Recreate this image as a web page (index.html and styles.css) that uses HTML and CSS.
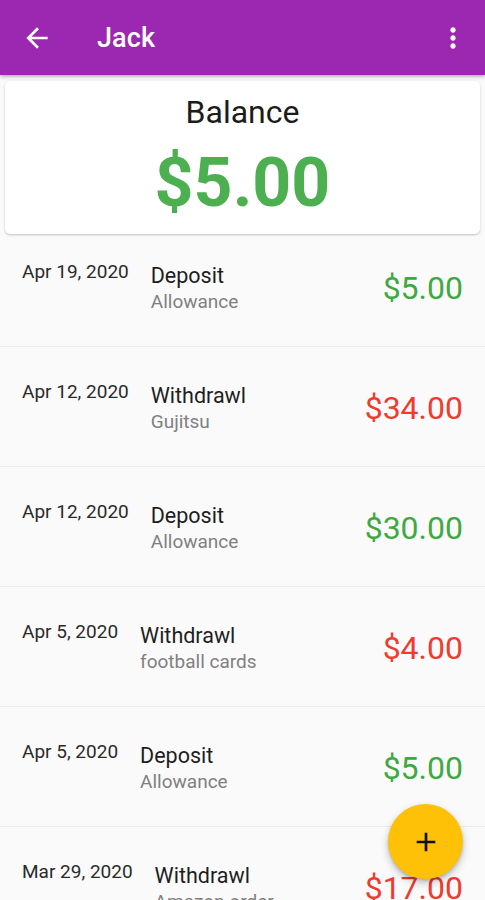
FILE: index.html
```html
<!DOCTYPE html>
<html lang="en">
<head>
<meta charset="utf-8">
<title>Jack</title>
<link rel="stylesheet" href="styles.css">
</head>
<body>
<div class="app">
  <header class="appbar">
    <svg class="icon back" viewBox="0 0 24 24" aria-hidden="true"><path d="M20 11H7.83l5.59-5.59L12 4l-8 8 8 8 1.41-1.41L7.83 13H20v-2z"/></svg>
    <h1 class="appbar-title">Jack</h1>
    <svg class="icon more" viewBox="0 0 24 24" aria-hidden="true"><path d="M12 8c1.1 0 2-.9 2-2s-.9-2-2-2-2 .9-2 2 .9 2 2 2zm0 2c-1.1 0-2 .9-2 2s.9 2 2 2 2-.9 2-2-.9-2-2-2zm0 6c-1.1 0-2 .9-2 2s.9 2 2 2 2-.9 2-2-.9-2-2-2z"/></svg>
  </header>

  <section class="balance-card">
    <div class="balance-label">Balance</div>
    <div class="balance-amount">$5.00</div>
  </section>

  <div class="list">
    <ul class="list-inner">
      <li class="row">
        <div class="date">Apr 19, 2020</div>
        <div class="info"><div class="title">Deposit</div><div class="subtitle">Allowance</div></div>
        <div class="amount pos">$5.00</div>
      </li>
      <li class="row">
        <div class="date">Apr 12, 2020</div>
        <div class="info"><div class="title">Withdrawl</div><div class="subtitle">Gujitsu</div></div>
        <div class="amount neg">$34.00</div>
      </li>
      <li class="row">
        <div class="date">Apr 12, 2020</div>
        <div class="info"><div class="title">Deposit</div><div class="subtitle">Allowance</div></div>
        <div class="amount pos">$30.00</div>
      </li>
      <li class="row">
        <div class="date">Apr 5, 2020</div>
        <div class="info"><div class="title">Withdrawl</div><div class="subtitle">football cards</div></div>
        <div class="amount neg">$4.00</div>
      </li>
      <li class="row">
        <div class="date">Apr 5, 2020</div>
        <div class="info"><div class="title">Deposit</div><div class="subtitle">Allowance</div></div>
        <div class="amount pos">$5.00</div>
      </li>
      <li class="row">
        <div class="date">Mar 29, 2020</div>
        <div class="info"><div class="title">Withdrawl</div><div class="subtitle">Amazon order</div></div>
        <div class="amount neg">$17.00</div>
      </li>
    </ul>
  </div>

  <button class="fab" type="button" aria-label="Add">
    <svg viewBox="0 0 24 24" aria-hidden="true"><path d="M19 13h-6v6h-2v-6H5v-2h6V5h2v6h6v2z"/></svg>
  </button>
</div>
</body>
</html>
```

FILE: styles.css
```css
* { box-sizing: border-box; }

html, body {
  margin: 0;
  padding: 0;
  height: 900px;
  overflow: hidden;
  background: #fafafa;
  font-family: Roboto, "Noto Sans", "Liberation Sans", sans-serif;
}

.app {
  position: relative;
  height: 900px;
  display: flex;
  flex-direction: column;
  overflow: hidden;
}

.appbar {
  position: relative;
  z-index: 2;
  flex: 0 0 75px;
  height: 75px;
  background: #9c27b0;
  display: flex;
  align-items: center;
  padding: 0 16px 0 21px;
  box-shadow: 0 2px 4px rgba(0, 0, 0, 0.22), 0 1px 2px rgba(0, 0, 0, 0.12);
}

.icon {
  width: 32px;
  height: 32px;
  fill: #ffffff;
  flex: 0 0 32px;
}

.appbar-title {
  flex: 1;
  margin: 1px 0 0 44px;
  color: #ffffff;
  font-size: 27px;
  font-weight: 500;
  line-height: 32px;
  letter-spacing: 0.1px;
}

.balance-card {
  margin: 6px 5px 5px;
  height: 153px;
  flex: 0 0 153px;
  background: #ffffff;
  border-radius: 5px;
  box-shadow: 0 1px 3px rgba(0, 0, 0, 0.16), 0 1px 1px rgba(0, 0, 0, 0.08);
  padding: 12px 0 11px;
  display: flex;
  flex-direction: column;
  align-items: center;
  gap: 12px;
}

.balance-label {
  font-size: 32px;
  line-height: 38px;
  color: #1c1c1c;
}

.balance-amount {
  font-size: 68px;
  line-height: 80px;
  font-weight: 700;
  color: #4caf50;
}

.list {
  flex: 1;
  overflow: hidden;
}

.list-inner {
  list-style: none;
  margin: -12px 0 0;
  padding: 0;
}

.row {
  height: 120px;
  border-bottom: 1px solid #ececec;
  display: flex;
  align-items: flex-start;
  gap: 22px;
  padding: 0 22px 0 22px;
}

.date {
  margin-top: 34px;
  font-size: 19px;
  line-height: 22px;
  color: #2a2a2a;
  white-space: nowrap;
}

.info {
  flex: 1;
  margin-top: 36px;
  display: flex;
  flex-direction: column;
  gap: 3px;
}

.title {
  font-size: 21.5px;
  line-height: 25px;
  color: #1e1e1e;
}

.subtitle {
  font-size: 19px;
  line-height: 22px;
  color: #808080;
}

.amount {
  align-self: center;
  margin-top: 3px;
  font-size: 32px;
  line-height: 36px;
  white-space: nowrap;
}

.amount.pos { color: #3daa3f; }
.amount.neg { color: #f03b30; }

.fab {
  position: absolute;
  right: 22px;
  bottom: 21px;
  width: 75px;
  height: 75px;
  border: 0;
  padding: 0;
  border-radius: 50%;
  background: #ffc107;
  display: flex;
  align-items: center;
  justify-content: center;
  box-shadow: 0 4px 8px rgba(0, 0, 0, 0.22), 0 2px 3px rgba(0, 0, 0, 0.14);
}

.fab svg {
  width: 32px;
  height: 32px;
  fill: #111111;
}
```
